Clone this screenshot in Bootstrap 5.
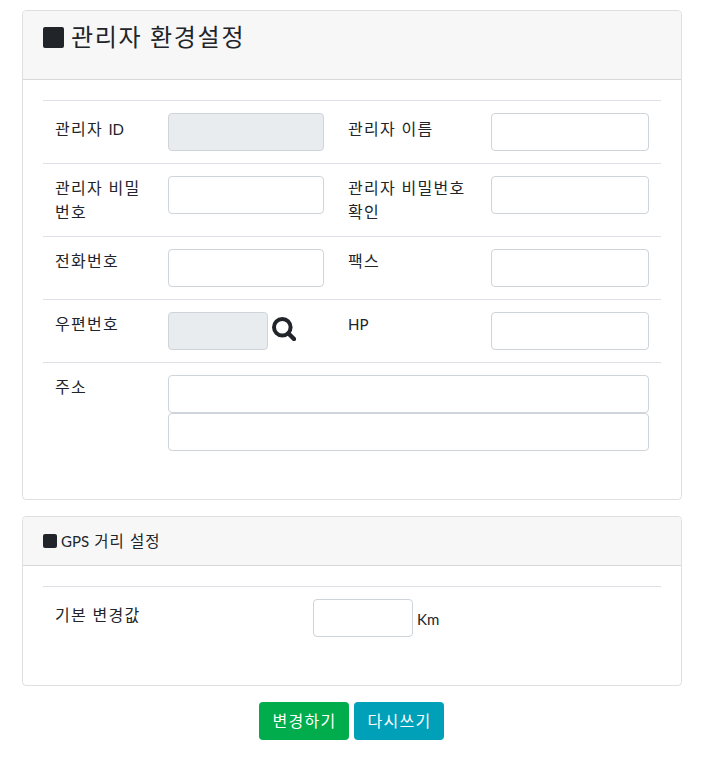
<!DOCTYPE html>
<html lang="ko">
<head>
<meta charset="utf-8">
<title>관리자 환경설정</title>
<link rel="stylesheet" href="https://cdn.jsdelivr.net/npm/bootstrap@5.3.0/dist/css/bootstrap.min.css">
<style>
body{font-family:"Lato","Noto Sans CJK KR",sans-serif;font-size:16px;color:#212529;background:#fff}
.page-wrap{width:660px;margin-left:22px;padding-top:10px}
.set-card{border:1px solid rgba(0,0,0,.125);border-radius:4px;margin-bottom:16px}
.set-head{background:#f7f7f7;border-bottom:1px solid rgba(0,0,0,.125);border-radius:3px 3px 0 0}
.head-lg{height:69px;padding:8px 20px}
.head-sm{height:49px;padding:12px 20px}
.title-lg{font-size:24px;line-height:36px;font-weight:400;letter-spacing:.07em;margin:0;display:flex;align-items:center;gap:7px}
.title-sm{font-size:15.5px;line-height:24px;font-weight:400;letter-spacing:.07em;margin:0;display:flex;align-items:center;gap:4px}
.sq-lg{width:21px;height:21px;background:#212529;border-radius:2px;display:block}
.sq-sm{width:14px;height:14px;background:#212529;border-radius:2px;display:block}
.set-body{padding:20px}
.set-table{table-layout:fixed;width:618px;margin:0 0 16px;border-top:1px solid #dee2e6;color:#212529}
.set-table td{padding:12px;border-bottom:1px solid #dee2e6;vertical-align:top;line-height:24px;font-size:16px;letter-spacing:.08em}
.set-table tr:last-child td{border-bottom:0}
.set-table td.cell-low{padding-top:16px}
.lat-text{letter-spacing:0;font-size:15px}
.set-input{height:38px;border:1px solid #ced4da;border-radius:4px;display:block;width:100%;background:#fff;padding:6px 12px}
.set-input:disabled{background:#e9ecef}
.zip-input{width:100px;flex:none}
.km-input{width:100px;flex:none}
.km-unit{padding-top:2px;letter-spacing:0;font-size:15px}
.zoom-mark{flex:none;align-self:flex-start;margin-top:5px}
.act-row{gap:5px;padding-right:1px}
.act-btn{width:90px;height:38px;padding:0 0 0 1px;border:0;border-radius:4px;color:#fff;font-size:16px;letter-spacing:.08em}
.act-green,.act-green:hover{background:#00ac4b;color:#fff}
.act-teal,.act-teal:hover{background:#00a0b9;color:#fff}
</style>
</head>
<body>
<div class="page-wrap">
  <div class="set-card">
    <div class="set-head head-lg">
      <h3 class="title-lg"><span class="sq-lg"></span><span>관리자 환경설정</span></h3>
    </div>
    <div class="set-body">
      <table class="set-table">
        <colgroup><col style="width:113px"><col style="width:180px"><col style="width:143px"><col style="width:182px"></colgroup>
        <tr>
          <td class="cell-low">관리자 <span class="lat-text">ID</span></td>
          <td><input class="set-input" disabled></td>
          <td class="cell-low">관리자 이름</td>
          <td><input class="set-input"></td>
        </tr>
        <tr>
          <td>관리자 비밀번호</td>
          <td><input class="set-input" type="password"></td>
          <td>관리자 비밀번호 확인</td>
          <td><input class="set-input" type="password"></td>
        </tr>
        <tr>
          <td>전화번호</td>
          <td><input class="set-input"></td>
          <td>팩스</td>
          <td><input class="set-input"></td>
        </tr>
        <tr>
          <td>우편번호</td>
          <td>
            <div class="d-flex align-items-center gap-1">
              <input class="set-input zip-input" disabled>
              <svg class="zoom-mark" width="24" height="24" viewBox="0 0 24 24" aria-label="검색"><circle cx="10.3" cy="10.3" r="8.3" fill="none" stroke="#212529" stroke-width="4"/><path d="M16.5 16.5 22 22" stroke="#212529" stroke-width="4.4" stroke-linecap="round"/></svg>
            </div>
          </td>
          <td><span class="lat-text">HP</span></td>
          <td><input class="set-input"></td>
        </tr>
        <tr>
          <td>주소</td>
          <td colspan="3">
            <input class="set-input">
            <input class="set-input">
          </td>
        </tr>
      </table>
    </div>
  </div>
  <div class="set-card">
    <div class="set-head head-sm">
      <h6 class="title-sm"><span class="sq-sm"></span><span><span class="lat-text">GPS</span> 거리 설정</span></h6>
    </div>
    <div class="set-body">
      <table class="set-table">
        <colgroup><col style="width:258px"><col></colgroup>
        <tr>
          <td class="cell-low">기본 변경값</td>
          <td>
            <div class="d-flex align-items-center gap-1">
              <input class="set-input km-input">
              <span class="km-unit">Km</span>
            </div>
          </td>
        </tr>
      </table>
    </div>
  </div>
  <div class="d-flex justify-content-center act-row">
    <button type="button" class="btn act-btn act-green">변경하기</button>
    <button type="button" class="btn act-btn act-teal">다시쓰기</button>
  </div>
</div>
<script src="https://cdn.jsdelivr.net/npm/bootstrap@5.3.0/dist/js/bootstrap.bundle.min.js"></script>
</body>
</html>
